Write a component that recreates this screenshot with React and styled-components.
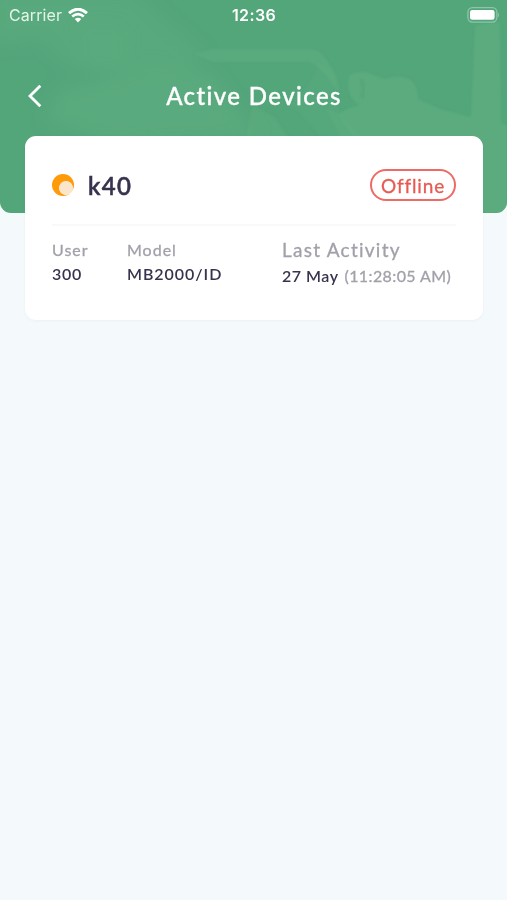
import React from "react";
import styled, { createGlobalStyle } from "styled-components";

const GlobalStyle = createGlobalStyle`
  * {
    box-sizing: border-box;
  }

  body {
    margin: 0;
    background: #f4f9fc;
    font-family: Lato, "Liberation Sans", sans-serif;
  }
`;

const devices = [
  {
    name: "k40",
    status: "Offline",
    user: "300",
    model: "MB2000/ID",
    date: "27 May",
    time: "(11:28:05 AM)",
  },
];

// Faint meeting room artwork behind the header
const HeaderArt = () => (
  <Art viewBox="0 0 507 213" preserveAspectRatio="none" aria-hidden="true">
    <defs>
      <filter id="soften">
        <feGaussianBlur stdDeviation="1.3" />
      </filter>
      <filter id="haze">
        <feGaussianBlur stdDeviation="8" />
      </filter>
    </defs>
    <g fill="#5eae80" filter="url(#haze)">
      <path d="M-10 -10H130L205 55L185 70H140L118 72L70 68L40 40L-10 45Z" opacity="0.45" />
      <path d="M78 25L125 27L127 60L112 72L82 68Z" opacity="0.3" />
      <path d="M60 90L150 66L210 72L258 138L120 145L45 120Z" opacity="0.6" />
    </g>
    <g fill="#5eae80" filter="url(#soften)">
      <path d="M194 54L213 49H312Q321 50 326 59L333 70Q339 80 340 92L332 84Q320 66 309 62H212Z" opacity="0.65" />
      <path d="M318 63L333 70Q340 90 338 108L360 140H322L300 113L285 104Q310 92 318 63Z" opacity="0.28" />
      <path d="M349 76Q354 71 366 72L384 79Q402 73 412 81Q419 89 418 99L440 109L471 117L475 25L500 22L501 123L507 125V213H355V140L338 114L349 108L360 105Q345 98 349 76Z" opacity="0.75" />
      <path d="M253 105L275 117L290 140H245Z" opacity="0.4" />
      <path d="M325 108Q340 110 362 140H342Z" opacity="0.4" />
    </g>
    <path d="M360 80Q368 88 361 98" fill="none" stroke="#50a277" strokeWidth="5" opacity="0.4" filter="url(#soften)" />
  </Art>
);

const WifiIcon = () => (
  <svg width="20" height="15" viewBox="0 0 20 15" fill="none" stroke="#fff">
    <path d="M1 5.2Q10 -2.8 19 5.2" strokeWidth="2.9" />
    <path d="M4.2 8.6Q10 3.6 15.8 8.6" strokeWidth="2.6" />
    <path d="M6.8 11.1Q10 8.5 13.2 11.1L10 14.5Z" fill="#fff" stroke="none" />
  </svg>
);

const BatteryIcon = () => (
  <svg width="33" height="16" viewBox="0 0 33 16">
    <rect x="0.9" y="0.7" width="29" height="14.4" rx="4.5" fill="none" stroke="#fff" strokeOpacity="0.35" strokeWidth="1.3" />
    <rect x="3" y="3" width="24.6" height="9.8" rx="2.2" fill="#fff" />
    <path d="M31 5.5Q33 8 31 10.5Z" fill="#fff" fillOpacity="0.35" />
  </svg>
);

const BackIcon = () => (
  <svg width="14" height="24" viewBox="0 0 14 24" fill="none" stroke="#fff" strokeWidth="2.8">
    <path d="M12.3 1.7L2 12L12.3 22.3" />
  </svg>
);

const DeviceCard = ({ device }) => (
  <Card>
    <CardTop>
      <Marker />
      <DeviceName>{device.name}</DeviceName>
      <Status>{device.status}</Status>
    </CardTop>
    <Details>
      <Detail>
        <Label>User</Label>
        <Value>{device.user}</Value>
      </Detail>
      <Detail>
        <Label>Model</Label>
        <Value $spacing="0.95px">{device.model}</Value>
      </Detail>
      <Detail>
        <Label $large>Last Activity</Label>
        <ActivityRow>
          <Value $spacing="0.5px">{device.date}</Value>
          <Time>{device.time}</Time>
        </ActivityRow>
      </Detail>
    </Details>
  </Card>
);

const App = () => {
  return (
    <Screen>
      <GlobalStyle />
      <Header>
        <HeaderArt />
        <StatusBar>
          <Carrier>
            Carrier
            <WifiIcon />
          </Carrier>
          <Clock>12:36</Clock>
          <Battery>
            <BatteryIcon />
          </Battery>
        </StatusBar>
        <NavBar>
          <BackButton aria-label="Back">
            <BackIcon />
          </BackButton>
          <Title>Active Devices</Title>
        </NavBar>
      </Header>
      <DeviceList>
        {devices.map((device) => (
          <DeviceCard key={device.name} device={device} />
        ))}
      </DeviceList>
    </Screen>
  );
};

const Screen = styled.div`
  min-height: 900px;
  background: #f4f9fc;
`;

const Header = styled.header`
  position: relative;
  height: 213px;
  overflow: hidden;
  border-radius: 0 0 11px 11px;
  background: #53a57a;
  color: #fff;
`;

const Art = styled.svg`
  position: absolute;
  inset: 0;
  width: 100%;
  height: 100%;
`;

const StatusBar = styled.div`
  position: relative;
  display: grid;
  grid-template-columns: 1fr auto 1fr;
  align-items: center;
  height: 30px;
  padding: 0 7px 0 9px;
  font-family: Inter, "Liberation Sans", sans-serif;
`;

const Carrier = styled.div`
  display: flex;
  align-items: center;
  gap: 6px;
  font-size: 16px;
  letter-spacing: 0.1px;
  color: #e4f5e6;
`;

const Clock = styled.div`
  padding-right: 1px;
  font-size: 16px;
  font-weight: 600;
  letter-spacing: 0.4px;
`;

const Battery = styled.div`
  display: flex;
  justify-content: flex-end;
`;

const NavBar = styled.nav`
  position: relative;
  display: grid;
  grid-template-columns: 40px 1fr 40px;
  align-items: center;
  height: 44px;
  margin-top: 44px;
  padding: 0 27px 0 28px;
`;

const BackButton = styled.button`
  display: flex;
  padding: 0;
  border: none;
  background: none;
  cursor: pointer;
  margin-top: -1px;
`;

const Title = styled.h1`
  margin: 0;
  font-size: 24px;
  font-weight: 500;
  letter-spacing: 1.4px;
  line-height: 44px;
  text-align: center;
  white-space: nowrap;
  -webkit-text-stroke: 0.35px currentColor;
`;

const DeviceList = styled.main`
  position: relative;
  margin-top: -77px;
  padding: 0 24px 0 25px;
`;

const Card = styled.section`
  height: 184px;
  padding: 0 27px;
  border-radius: 11px;
  background: #fff;
  box-shadow: 0 1px 3px rgba(60, 90, 110, 0.05);
`;

const CardTop = styled.div`
  display: flex;
  align-items: center;
  height: 90px;
  padding-top: 9px;
  border-bottom: 2px solid #f9f9fa;
`;

const Marker = styled.span`
  width: 22px;
  height: 22px;
  border-radius: 50%;
  background: radial-gradient(circle at 14px 14px, #fbe6cb 6.6px, #ff9a08 7.4px);
`;

const DeviceName = styled.h2`
  margin: 1px auto 0 14px;
  font-size: 24px;
  font-weight: 500;
  letter-spacing: 1.4px;
  color: #35334d;
  -webkit-text-stroke: 0.6px currentColor;
`;

const Status = styled.span`
  width: 86px;
  height: 32px;
  border: 2px solid #ee6b65;
  border-radius: 16px;
  font-size: 19px;
  line-height: 29px;
  letter-spacing: 0.85px;
  text-align: center;
  color: #e75a52;
  -webkit-text-stroke: 0.3px currentColor;
`;

const Details = styled.div`
  display: grid;
  grid-template-columns: 75px 155px 1fr;
  padding-top: 12px;
`;

const Detail = styled.div`
  display: flex;
  flex-direction: column;
  white-space: nowrap;
`;

const Label = styled.span`
  font-size: ${({ $large }) => ($large ? "19px" : "16px")};
  line-height: 24px;
  letter-spacing: ${({ $large }) => ($large ? "1.25px" : "1px")};
  color: #a1a1aa;
  -webkit-text-stroke: 0.3px currentColor;
`;

const Value = styled.span`
  font-size: 16px;
  font-weight: 600;
  line-height: 24px;
  letter-spacing: ${({ $spacing }) => $spacing || "0.7px"};
  color: #35334d;
`;

const ActivityRow = styled.div`
  display: flex;
  gap: 6px;
  padding-top: 2px;
`;

const Time = styled.span`
  font-size: 16px;
  line-height: 24px;
  letter-spacing: 0.4px;
  color: #a1a1aa;
  -webkit-text-stroke: 0.3px currentColor;
`;

export default App;
